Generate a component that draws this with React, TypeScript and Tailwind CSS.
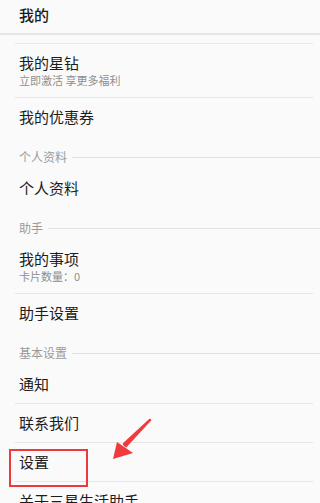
const font = { fontFamily: '"Noto Sans CJK SC", "Noto Sans", sans-serif' };

type Row =
  | { kind: 'section'; label: string }
  | { kind: 'item'; title: string; sub?: string; last?: boolean };

const rows: Row[] = [
  { kind: 'item', title: '我的星钻', sub: '立即激活 享更多福利' },
  { kind: 'item', title: '我的优惠券', last: true },
  { kind: 'section', label: '个人资料' },
  { kind: 'item', title: '个人资料', last: true },
  { kind: 'section', label: '助手' },
  { kind: 'item', title: '我的事项', sub: '卡片数量：0' },
  { kind: 'item', title: '助手设置', last: true },
  { kind: 'section', label: '基本设置' },
  { kind: 'item', title: '通知' },
  { kind: 'item', title: '联系我们' },
  { kind: 'item', title: '设置' },
  { kind: 'item', title: '关于三星生活助手' },
];

function SectionLabel({ label }: { label: string }) {
  return (
    <div className="flex h-[32px] items-end pl-[19px]">
      <div className="flex w-full items-center pb-[4px]">
        <span className="text-[12px] leading-[16px] text-[#9a9a9a]">{label}</span>
        <div className="ml-[5px] h-px flex-1 bg-[#e2e2e2]" />
      </div>
    </div>
  );
}

function Item({ title, sub, last }: { title: string; sub?: string; last?: boolean }) {
  return (
    <div className="ml-[15px] mr-[7px]">
      <div
        className={`flex flex-col justify-center pl-[4px] ${sub ? 'h-[54px]' : 'h-[39px]'} border-b ${last ? 'border-transparent' : 'border-[#e6e6e6]'}`}
      >
        <span className="text-[15px] leading-[20px] text-[#1c1c1c]">{title}</span>
        {sub && <span className="mt-[-1px] text-[11px] leading-[16px] text-[#8f8f8f]">{sub}</span>}
      </div>
    </div>
  );
}

export default function App() {
  return (
    <div className="relative h-[503px] w-[320px] overflow-hidden bg-[#fafafa]" style={font}>
      <div className="flex h-[35px] items-start border-b-2 border-[#e6e6e6] pl-[19px] pt-[4px]">
        <span className="text-[15px] font-medium leading-[22px] text-[#1a1a1a]">我的</span>
      </div>
      <div className="ml-[15px] mr-[7px] h-[9px] border-b border-[#e8e8e8]" />

      {rows.map((r, i) =>
        r.kind === 'section' ? (
          <SectionLabel key={i} label={r.label} />
        ) : (
          <Item key={i} title={r.title} sub={r.sub} last={r.last} />
        )
      )}

      {/* annotation: red box around 设置 */}
      <div className="pointer-events-none absolute left-[9px] top-[449px] h-[38px] w-[79px] border-2 border-[#ea3a3a]" />

      {/* annotation: arrow */}
      <svg className="pointer-events-none absolute left-0 top-0" width="320" height="503" viewBox="0 0 320 503">
        <path d="M150 420 L126 446 L124 444 Z" fill="#ef3b3b" stroke="#ef3b3b" strokeWidth="2.5" strokeLinejoin="round" />
        <path d="M113 459 L117 442 L133 453 Z" fill="#ef3b3b" />
      </svg>
    </div>
  );
}
